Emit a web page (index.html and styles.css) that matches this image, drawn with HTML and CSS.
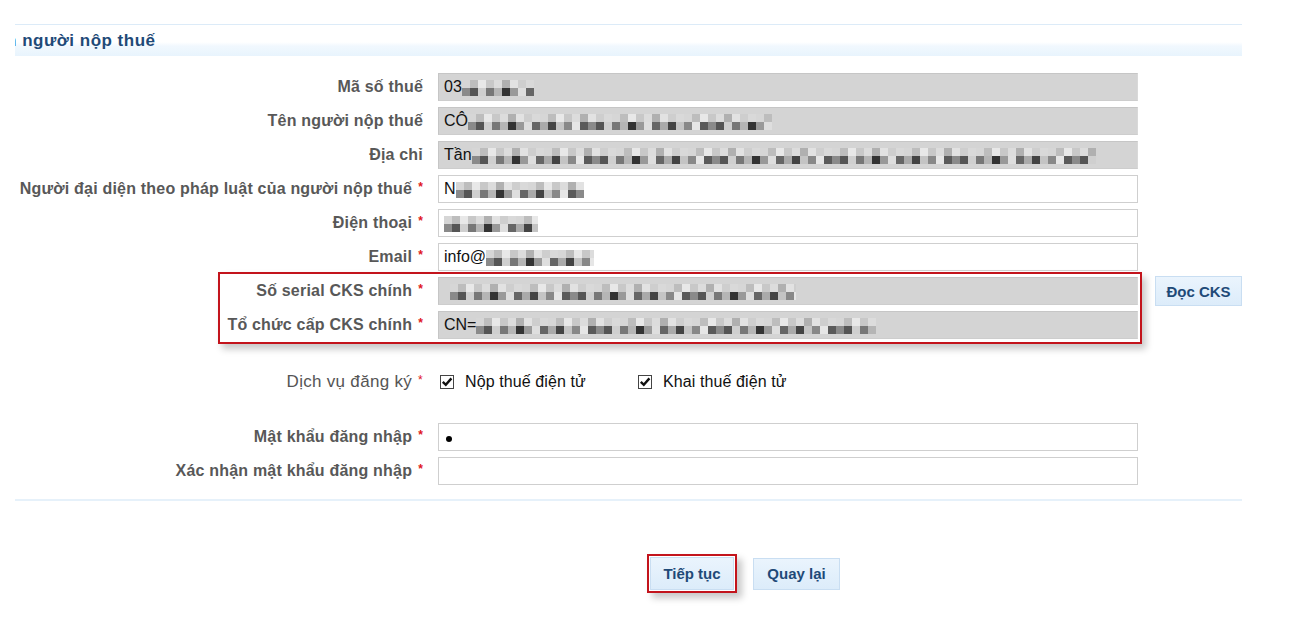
FILE: index.html
```html
<!DOCTYPE html>
<html lang="vi">
<head>
    <meta charset="utf-8">
    <title>Đăng ký thuế điện tử - Thông tin người nộp thuế</title>
    <link rel="stylesheet" href="styles.css">
</head>
<body>

<div class="page">
    <div class="panel-title"><span>Thông tin người nộp thuế</span></div>

    <div class="form">
        <div class="row">
            <div class="label">Mã số thuế</div>
            <div class="field readonly">03<span class="mosaic w-mst"></span></div>
        </div>
        <div class="row">
            <div class="label">Tên người nộp thuế</div>
            <div class="field readonly">CÔ<span class="mosaic w-ten"></span></div>
        </div>
        <div class="row">
            <div class="label">Địa chỉ</div>
            <div class="field readonly">Tần<span class="mosaic w-diachi"></span></div>
        </div>
        <div class="row">
            <div class="label">Người đại diện theo pháp luật của người nộp thuế<span class="req">*</span></div>
            <div class="field">N<span class="mosaic w-daidien"></span></div>
        </div>
        <div class="row">
            <div class="label">Điện thoại<span class="req">*</span></div>
            <div class="field"><span class="mosaic w-dienthoai"></span></div>
        </div>
        <div class="row">
            <div class="label">Email<span class="req">*</span></div>
            <div class="field">info@<span class="mosaic w-email"></span></div>
        </div>

        <div class="cks-wrap">
            <div class="marked">
                <div class="row">
                    <div class="label">Số serial CKS chính<span class="req">*</span></div>
                    <div class="field readonly"><span class="mosaic w-serial"></span></div>
                </div>
                <div class="row">
                    <div class="label">Tổ chức cấp CKS chính<span class="req">*</span></div>
                    <div class="field readonly">CN=<span class="mosaic w-tochuc"></span></div>
                </div>
            </div>
            <button class="btn btn-cks" type="button">Đọc CKS</button>
        </div>

        <div class="row services">
            <div class="label">Dịch vụ đăng ký<span class="req">*</span></div>
            <div class="checks">
                <span class="check">
                    <svg width="14" height="14" viewBox="0 0 14 14"><rect x="0.5" y="0.5" width="13" height="13" fill="#fff" stroke="#444"/><path d="M2.8 6.8 L5.8 9.8 L11.4 3.4" fill="none" stroke="#111" stroke-width="2.4"/></svg>
                    Nộp thuế điện tử
                </span>
                <span class="check">
                    <svg width="14" height="14" viewBox="0 0 14 14"><rect x="0.5" y="0.5" width="13" height="13" fill="#fff" stroke="#444"/><path d="M2.8 6.8 L5.8 9.8 L11.4 3.4" fill="none" stroke="#111" stroke-width="2.4"/></svg>
                    Khai thuế điện tử
                </span>
            </div>
        </div>

        <div class="row pass-first">
            <div class="label">Mật khẩu đăng nhập<span class="req">*</span></div>
            <div class="field"><span class="dot"></span></div>
        </div>
        <div class="row">
            <div class="label">Xác nhận mật khẩu đăng nhập<span class="req">*</span></div>
            <div class="field"></div>
        </div>
    </div>

    <div class="separator"></div>

    <div class="actions">
        <span class="mark-box"><button class="btn btn-main btn-next" type="button">Tiếp tục</button></span>
        <button class="btn btn-main" type="button">Quay lại</button>
    </div>
</div>

</body>
</html>
```

FILE: styles.css
```css
body {
    margin: 0;
    font-family: "Liberation Sans", Arial, sans-serif;
    font-size: 16px;
    color: #111;
    background: #fff;
}

.page {
    width: 1227px;
    padding: 24px 0 30px 15px;
}

.panel-title {
    height: 31px;
    line-height: 31px;
    border-top: 1px solid #dcebf8;
    background: linear-gradient(#fff 0%, #fff 55%, #f1f8fe 68%, #e8f4fd 100%);
    overflow: hidden;
    white-space: nowrap;
}
.panel-title span {
    display: inline-block;
    margin-left: -80px;
    font-size: 17px;
    letter-spacing: 0.5px;
    font-weight: bold;
    color: #1f4a78;
}

.form {
    margin-top: 17px;
}

.row {
    display: flex;
    align-items: center;
    gap: 15px;
    margin-bottom: 6px;
}

.label {
    width: 408px;
    flex-shrink: 0;
    text-align: right;
    font-weight: bold;
    letter-spacing: 0.2px;
    color: #585858;
    white-space: nowrap;
}

.req {
    color: #e0141b;
    font-size: 12px;
    margin-left: 6px;
    vertical-align: 3px;
}

.field {
    width: 700px;
    height: 28px;
    box-sizing: border-box;
    border: 1px solid #cfcfcf;
    background: #fff;
    padding: 0 5px;
    line-height: 26px;
    white-space: nowrap;
    overflow: hidden;
}
.field.readonly {
    background: #d4d4d4;
    border-color: #c6c6c6 #d9d9d9 #cdcdcd #c6c6c6;
}

/* pixelated values: two rows of 8px blocks */
.mosaic {
    display: inline-block;
    height: 16px;
    vertical-align: -4px;
    background:
        repeating-linear-gradient(90deg,
            #8a8a8a 0 8px, #555 8px 16px, #cfcfcf 16px 24px, #777 24px 32px,
            #b5b5b5 32px 40px, #333 40px 48px, #999 48px 56px, #dedede 56px 64px,
            #666 64px 72px, #aaa 72px 80px, #444 80px 88px, #c4c4c4 88px 96px,
            #888 96px 104px, #e6e6e6 104px 112px, #5a5a5a 112px 120px)
            0 8px / 100% 8px no-repeat,
        repeating-linear-gradient(90deg,
            #d6d6d6 0 8px, #bdbdbd 8px 16px, #e8e8e8 16px 24px, #c8c8c8 24px 32px,
            #dcdcdc 32px 40px, #b0b0b0 40px 48px, #e2e2e2 48px 56px, #cecece 56px 64px,
            #d9d9d9 64px 72px)
            0 0 / 100% 8px no-repeat;
}
.w-mst { width: 72px; }
.w-ten { width: 304px; }
.w-diachi { width: 624px; }
.w-daidien { width: 128px; }
.w-dienthoai { width: 94px; }
.w-email { width: 108px; }
.w-serial { width: 346px; margin-left: 6px; }
.w-tochuc { width: 400px; }

.cks-wrap {
    display: flex;
    align-items: flex-start;
    margin-top: -5px;
}

.marked {
    margin-left: 203px;
    border: 2px solid #c3141c;
    padding: 3px 2px 3px 0;
    box-shadow: 4px 5px 7px rgba(0, 0, 0, .22);
}
.marked .label {
    width: 203px;
}
.marked .row:last-child {
    margin-bottom: 0;
}

.btn {
    font-family: "Liberation Sans", Arial, sans-serif;
    font-weight: bold;
    font-size: 15px;
    color: #1f4a78;
    background: linear-gradient(#eaf4fd, #dcecfa);
    border: 1px solid #c9def2;
    cursor: pointer;
}

.btn-cks {
    margin: 4px 0 0 13px;
    width: 87px;
    height: 30px;
}

.services {
    margin-top: 28px;
}
.services .label {
    font-weight: normal;
    font-size: 17px;
    letter-spacing: 0.3px;
    color: #555;
}
.services .req {
    font-size: 12px;
}

.checks {
    display: flex;
    margin-left: 2px;
}
.check {
    display: flex;
    align-items: center;
    gap: 11px;
    width: 198px;
    color: #111;
    letter-spacing: 0.1px;
}

.pass-first {
    margin-top: 31px;
}

.dot {
    display: inline-block;
    width: 6px;
    height: 6px;
    border-radius: 50%;
    background: #000;
    margin-left: 2px;
    vertical-align: 0;
}

.separator {
    margin-top: 14px;
    height: 2px;
    background: #e6f1fa;
}

.actions {
    display: flex;
    align-items: center;
    gap: 16px;
    padding: 53px 0 0 632px;
}

.btn-main {
    width: 87px;
    height: 32px;
}

.mark-box {
    display: block;
    border: 2px solid #c3141c;
    padding: 1px;
    box-shadow: 5px 5px 7px rgba(0, 0, 0, .22);
}
.btn-next {
    display: block;
    width: 84px;
    height: 33px;
}
```
